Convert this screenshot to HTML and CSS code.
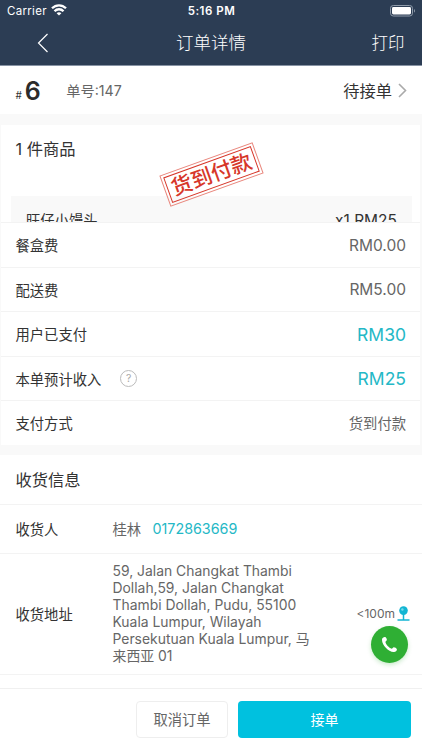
FILE: index.html
```html
<!DOCTYPE html>
<html lang="zh-CN">
<head>
<meta charset="utf-8">
<meta name="viewport" content="width=device-width, initial-scale=1">
<title>订单详情</title>
<link rel="stylesheet" href="styles.css">
</head>
<body>
<div class="screen">
  <header class="header">
    <div class="status">
      <div class="status-left"><span class="carrier">Carrier</span>
        <svg class="wifi" width="16" height="12" viewBox="0 0 16 12" fill="none" stroke="#fff" stroke-width="2.300"><path d="M1 4.300C5 .3 11 .3 15 4.300"/><path d="M3.500 7.200C6 4.600 10 4.600 12.500 7.200"/><path d="M8 11.600 5.600 9.200C7 8 9 8 10.400 9.200Z" fill="#fff" stroke="none"/></svg>
      </div>
      <span class="clock">5:16 PM</span>
      <div class="status-right">
        <svg width="26" height="12" viewBox="0 0 26 12"><rect x=".5" y=".5" width="22" height="10.500" rx="2.800" fill="none" stroke="#8f9baa"/><rect x="2" y="2" width="19" height="7.500" rx="1.400" fill="#fff"/><path d="M24 4v3.600c1.300-.5 1.300-3.100 0-3.600Z" fill="#8f9baa"/></svg>
      </div>
    </div>
    <nav class="nav">
      <svg class="back" width="12" height="20" viewBox="0 0 12 20" fill="none" stroke="#fff" stroke-width="1.200"><path d="M10.500 1 1.500 10l9 9"/></svg>
      <h1 class="title">订单详情</h1>
      <span class="print">打印</span>
    </nav>
  </header>

  <section class="order">
    <span class="hash">#</span><span class="seq">6</span>
    <span class="order-no">单号:147</span>
    <span class="state">待接单</span>
    <svg class="chevron" width="9" height="15" viewBox="0 0 9 15" fill="none" stroke="#aaa" stroke-width="1.600"><path d="m1 1 6.500 6.500L1 14"/></svg>
  </section>

  <section class="bill">
    <div class="goods">
      <h2 class="goods-title">1 件商品</h2>
      <div class="product"><span>旺仔小馒头</span><span class="qty">x1 RM25</span></div>
      <div class="stamp"><span>货到付款</span></div>
    </div>
    <div class="row"><span>餐盒费</span><span class="value">RM0.00</span></div>
    <div class="row"><span>配送费</span><span class="value">RM5.00</span></div>
    <div class="row"><span>用户已支付</span><span class="value money">RM30</span></div>
    <div class="row"><span>本单预计收入</span><span class="help">?</span><span class="value money">RM25</span></div>
    <div class="row"><span>支付方式</span><span class="value cjk">货到付款</span></div>
  </section>

  <section class="delivery">
    <h2 class="delivery-title">收货信息</h2>
    <div class="info receiver"><span class="label">收货人</span><span class="name">桂林</span><span class="phone">0172863669</span></div>
    <div class="info address"><span class="label">收货地址</span>
      <p class="lines">59, Jalan Changkat Thambi<br>Dollah,59, Jalan Changkat<br>Thambi Dollah, Pudu, 55100<br>Kuala Lumpur, Wilayah<br>Persekutuan Kuala Lumpur, 马<br>来西亚 01</p>
      <span class="distance">&lt;100m</span>
      <svg class="pin" width="13" height="15" viewBox="0 0 13 15"><circle cx="6.500" cy="4.600" r="4.300" fill="#13b5d3"/><circle cx="5.400" cy="3.500" r="1.200" fill="#75dcec"/><path d="M6.500 8v5.700M.5 14h12" stroke="#13b5d3" stroke-width="1.500"/></svg>
      <div class="call"><svg width="17" height="17" viewBox="0 0 18 18"><path d="M1.300 2.700C2 1.500 3.500.6 4.500 1.100c1 .5 1.800 2.200 1.700 3.200-.1.900-1.500 1.300-1.500 2.100.4 2.500 3.800 6.300 6.600 7 .9 0 1.300-1.400 2.300-1.500 1.100 0 2.900 1 3.200 2 .3 1.100-.8 2.500-2 2.900C8.500 18.500-.5 8.400 1.300 2.700Z" fill="#fff"/></svg></div>
    </div>
  </section>

  <footer class="footer"><button class="cancel">取消订单</button><button class="accept">接单</button></footer>
</div>
</body>
</html>
```
FILE: styles.css
```css
* { box-sizing: border-box; }
body { margin: 0; font-family: Inter, "Noto Sans CJK SC", sans-serif; font-size: 14.3px; font-weight: 390; color: #333; background: #fff; }
h1, h2, p { margin: 0; font-weight: inherit; }
svg { display: block; flex: none; }
.screen { width: 422px; height: 750px; display: flex; flex-direction: column; overflow: hidden; background: #fff; white-space: nowrap; }

.header { height: 66px; background: #2c3d54; border-bottom: 1px solid #8793a4; color: #fff; }
.status { display: grid; grid-template-columns: 1fr auto 1fr; height: 22px; align-items: center; padding: 0 6px 0 7px; font-size: 11.5px; letter-spacing: .3px; font-weight: 400; }
.status-left { display: flex; align-items: center; gap: 4px; }
.wifi { margin-top: -2px; }
.clock { font-weight: 600; letter-spacing: .5px; }
.status-right { justify-self: end; }
.nav { display: grid; grid-template-columns: 1fr auto 1fr; align-items: center; height: 42px; }
.back { margin-left: 37px; }
.title, .print { font-size: 17px; font-weight: 300; line-height: 42px; }
.title { font-size: 17.500px; }
.print { justify-self: end; margin-right: 17.500px; font-size: 16.500px; }

.order { height: 48px; display: flex; align-items: center; padding: 0 15px 0 15.500px; }
.hash { font-size: 10px; margin-top: 10px; }
.seq { font-size: 25px; font-weight: 600; margin: 2px 0 0 3px; color: #2b2b2b; }
.order-no { margin-left: 25.500px; font-size: 14.200px; color: #666; }
.state { margin-left: auto; font-size: 16.300px; }
.chevron { margin-left: 6px; }

.bill { border: solid #f9f9f9; border-width: 11px 2px 10px 1px; }
.goods { position: relative; height: 97px; overflow: hidden; padding: 0 8px 0 10px; }
.goods-title { height: 71px; padding: 12px 0 0 4.500px; font-size: 16.300px; line-height: 24px; }
.product { display: flex; justify-content: space-between; height: 50px; padding: 0 15px; background: #f9f9f9; line-height: 50px; }
.qty { font-size: 15.500px; }
.stamp { position: absolute; left: 161px; top: 33px; width: 99px; height: 33px; padding: 2px; border: 1px solid #e9877d; transform: rotate(-19.800deg); }
.stamp span { display: block; height: 27px; border: 1.500px solid #d7372a; color: #d7372a; font-size: 21px; line-height: 26px; text-align: center; font-weight: 500; }
.row { height: 44.500px; display: flex; align-items: center; padding: 0 14px 0 14.500px; border-top: 1px solid #f3f3f3; }
.value { margin-left: auto; padding-top: 1px; font-size: 15.500px; color: #666; }
.money { font-size: 17.500px; color: #24b8c6; }
.cjk { padding-top: 0; font-size: 14.300px; }
.help { width: 17px; height: 17px; margin-left: 19px; border: 1px solid #bbb; border-radius: 50%; font-size: 10.500px; line-height: 15px; text-align: center; color: #aaa; }

.delivery-title { height: 49px; padding-left: 15.500px; font-size: 16.300px; line-height: 50px; }
.info { position: relative; display: flex; align-items: center; border-top: 1px solid #f3f3f3; padding: 0 12px 0 15.500px; }
.label { width: 97px; }
.receiver { height: 49px; }
.name { width: 40px; color: #666; }
.phone { color: #24b8c6; }
.address { height: 122px; border-bottom: 1px solid #f3f3f3; }
.lines { padding-top: 1px; font-size: 13.900px; line-height: 17px; color: #666; }
.distance { margin-left: auto; font-size: 12px; color: #666; }
.pin { margin-left: 2px; }
.call { position: absolute; left: 371px; top: 72px; width: 37px; height: 37px; border-radius: 50%; background: #2faf34; box-shadow: 0 2px 4px #2faf3440; display: grid; place-items: center; }

.footer { display: flex; justify-content: flex-end; gap: 10px; height: 62px; margin-top: auto; padding: 12px 11px 0; border-top: 1px solid #f0f0f0; }
button { height: 37px; padding: 0 0 2px; border-radius: 4px; font: inherit; }
.cancel { width: 92px; border: 1px solid #eee; background: #fff; color: #666; }
.accept { width: 173px; border: 0; background: #00c1df; color: #fff; font-size: 14px; }
```
